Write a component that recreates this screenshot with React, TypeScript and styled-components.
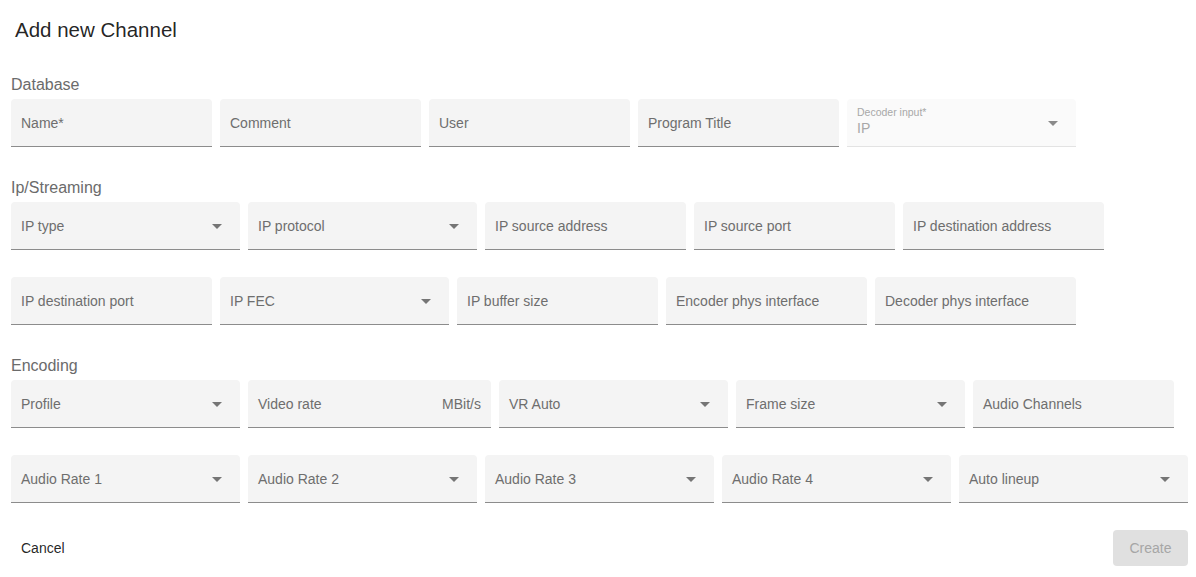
import React from 'react';
import styled, { createGlobalStyle } from 'styled-components';

type Kind = 'text' | 'select' | 'unit' | 'disabled';

interface FieldDef {
    label: string;
    kind: Kind;
    width: number;
    value?: string;
    unit?: string;
}

const sections: { title: string; rows: FieldDef[][] }[] = [
    {
        title: 'Database',
        rows: [
            [
                { label: 'Name*', kind: 'text', width: 201 },
                { label: 'Comment', kind: 'text', width: 201 },
                { label: 'User', kind: 'text', width: 201 },
                { label: 'Program Title', kind: 'text', width: 201 },
                { label: 'Decoder input*', kind: 'disabled', width: 229, value: 'IP' },
            ],
        ],
    },
    {
        title: 'Ip/Streaming',
        rows: [
            [
                { label: 'IP type', kind: 'select', width: 229 },
                { label: 'IP protocol', kind: 'select', width: 229 },
                { label: 'IP source address', kind: 'text', width: 201 },
                { label: 'IP source port', kind: 'text', width: 201 },
                { label: 'IP destination address', kind: 'text', width: 201 },
            ],
            [
                { label: 'IP destination port', kind: 'text', width: 201 },
                { label: 'IP FEC', kind: 'select', width: 229 },
                { label: 'IP buffer size', kind: 'text', width: 201 },
                { label: 'Encoder phys interface', kind: 'text', width: 201 },
                { label: 'Decoder phys interface', kind: 'text', width: 201 },
            ],
        ],
    },
    {
        title: 'Encoding',
        rows: [
            [
                { label: 'Profile', kind: 'select', width: 229 },
                { label: 'Video rate', kind: 'unit', width: 243, unit: 'MBit/s' },
                { label: 'VR Auto', kind: 'select', width: 229 },
                { label: 'Frame size', kind: 'select', width: 229 },
                { label: 'Audio Channels', kind: 'text', width: 201 },
            ],
            [
                { label: 'Audio Rate 1', kind: 'select', width: 229 },
                { label: 'Audio Rate 2', kind: 'select', width: 229 },
                { label: 'Audio Rate 3', kind: 'select', width: 229 },
                { label: 'Audio Rate 4', kind: 'select', width: 229 },
                { label: 'Auto lineup', kind: 'select', width: 229 },
            ],
        ],
    },
];

const DropArrow: React.FC<{ muted?: boolean }> = ({ muted }) => (
    <Arrow viewBox="0 0 24 24" width="24" height="24">
        <path d="M7 10l5 5 5-5z" fill={muted ? '#8a8a8a' : '#757575'} />
    </Arrow>
);

const InputField: React.FC<{ field: FieldDef }> = ({ field }) => {
    const { label, kind, width, value, unit } = field;

    if (kind === 'disabled') {
        return (
            <FieldBox $width={width} $disabled>
                <Stack>
                    <SmallLabel>{label}</SmallLabel>
                    <Value>{value}</Value>
                </Stack>
                <DropArrow muted />
            </FieldBox>
        );
    }

    return (
        <FieldBox $width={width}>
            <Label>{label}</Label>
            {kind === 'select' && <DropArrow />}
            {kind === 'unit' && <Unit>{unit}</Unit>}
        </FieldBox>
    );
};

const App: React.FC = () => (
    <Dialog>
        <GlobalStyle />
        <Title>Add new Channel</Title>
        <Sections>
            {sections.map((section) => (
                <Section key={section.title}>
                    <SectionLabel>{section.title}</SectionLabel>
                    <Rows>
                        {section.rows.map((row, i) => (
                            <Row key={i}>
                                {row.map((field) => (
                                    <InputField key={field.label} field={field} />
                                ))}
                            </Row>
                        ))}
                    </Rows>
                </Section>
            ))}
        </Sections>
        <Footer>
            <TextButton>Cancel</TextButton>
            <CreateButton disabled>Create</CreateButton>
        </Footer>
    </Dialog>
);

const GlobalStyle = createGlobalStyle`
    body {
        margin: 0;
        background: #fff;
        font-family: 'Liberation Sans', Arial, sans-serif;
    }
`;

const Dialog = styled.div`
    width: 1196px;
    padding: 14px 8px 0 11px;
    box-sizing: border-box;
`;

const Title = styled.h2`
    margin: 0 0 0 4px;
    font-size: 20.5px;
    line-height: 32px;
    font-weight: 400;
    color: rgba(0, 0, 0, 0.87);
`;

const Sections = styled.div`
    display: flex;
    flex-flow: column;
    gap: 28px;
    margin-top: 26px;
`;

const Section = styled.section`
    display: flex;
    flex-flow: column;
`;

const SectionLabel = styled.div`
    font-size: 16px;
    line-height: 24px;
    padding-top: 1px;
    height: 24px;
    box-sizing: border-box;
    color: #6b6b6b;
    margin-bottom: 3px;
`;

const Rows = styled.div`
    display: flex;
    flex-flow: column;
    gap: 27px;
`;

const Row = styled.div`
    display: flex;
    gap: 8px;
`;

const FieldBox = styled.div<{ $width: number; $disabled?: boolean }>`
    width: ${({ $width }) => $width}px;
    height: 48px;
    box-sizing: border-box;
    padding: 0 10px;
    display: flex;
    align-items: center;
    background: ${({ $disabled }) => ($disabled ? '#fafafa' : '#f4f4f4')};
    border-radius: 4px 4px 0 0;
    border-bottom: 1px solid ${({ $disabled }) => ($disabled ? '#e3e3e3' : '#8c8c8c')};
`;

const Label = styled.span`
    font-size: 14px;
    color: #6e6e6e;
    white-space: nowrap;
`;

const Unit = styled.span`
    margin-left: auto;
    font-size: 14px;
    color: #6e6e6e;
`;

const Stack = styled.div`
    display: flex;
    flex-flow: column;
    margin-top: -2px;
`;

const SmallLabel = styled.span`
    font-size: 10.5px;
    line-height: 13px;
    color: #a8a8a8;
`;

const Value = styled.span`
    font-size: 14px;
    line-height: 18px;
    color: #a8a8a8;
`;

const Arrow = styled.svg`
    margin-left: auto;
    margin-right: 1px;
    flex-shrink: 0;
`;

const Footer = styled.div`
    display: flex;
    justify-content: space-between;
    align-items: center;
    margin-top: 27px;
`;

const TextButton = styled.button`
    height: 36px;
    margin-left: 2px;
    padding: 0 8px;
    border: none;
    background: transparent;
    font-family: inherit;
    font-size: 14px;
    color: rgba(0, 0, 0, 0.87);
`;

const CreateButton = styled.button`
    width: 75px;
    height: 36px;
    border: none;
    border-radius: 4px;
    background: #e0e0e0;
    font-family: inherit;
    font-size: 14px;
    color: #a6a6a6;
`;

export default App;
